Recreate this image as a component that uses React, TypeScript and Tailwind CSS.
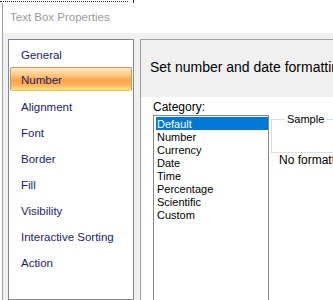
import React from "react";

const navItems = [
  "General",
  "Number",
  "Alignment",
  "Font",
  "Border",
  "Fill",
  "Visibility",
  "Interactive Sorting",
  "Action",
];

const categories = [
  "Default",
  "Number",
  "Currency",
  "Date",
  "Time",
  "Percentage",
  "Scientific",
  "Custom",
];

export default function App() {
  return (
    <div className="w-[333px] h-[300px] overflow-hidden bg-white flex flex-col font-['Liberation_Sans',Arial,sans-serif]">
      {/* top strip behind window */}
      <div className="h-[3px] flex items-start shrink-0">
        <div className="w-[128px] mt-[1px] border-t border-dotted border-[#222]" />
        <div className="ml-[5px] w-[1px] h-[3px] bg-[#333]" />
      </div>
      {/* window */}
      <div className="flex-1 ml-[2px] border-l border-[#a0a0a0] flex flex-col min-h-0">
        <div className="h-[30px] shrink-0 bg-white flex items-center pl-[7px] text-[11.5px] text-[#9a9a9a]">
          Text Box Properties
        </div>
        <div className="flex-1 bg-[#f0f0f0] flex pl-[5px] pt-[6px] min-h-0">
          {/* left nav */}
          <div className="w-[126px] shrink-0 bg-white border border-[#828790] pt-[1px] flex flex-col">
            {navItems.map((item) =>
              item === "Number" ? (
                <div
                  key={item}
                  className="mx-[1px] h-[24px] mb-[2px] flex items-center pl-[10px] pt-[3px] rounded-[2px] border border-[#b99a66] border-b-[#f5c237] bg-[linear-gradient(to_bottom,#fee8c4_0%,#fdcb88_30%,#fca447_55%,#fdb55a_78%,#ffe28a_100%)] text-[11.5px] text-[#1c1a78]"
                >
                  {item}
                </div>
              ) : (
                <div
                  key={item}
                  className="h-[26px] flex items-center pl-[12px] pt-[4px] text-[11.5px] text-[#1c1a78]"
                >
                  {item}
                </div>
              )
            )}
          </div>
          {/* right panel */}
          <div className="ml-[6px] flex-1 border border-r-0 border-b-0 border-[#a0a0a0] flex flex-col min-w-0">
            <div className="h-[57px] shrink-0 bg-[#f0f0f0] flex items-center pl-[9px] pb-[3px] text-[14px] text-black whitespace-nowrap overflow-hidden">
              Set number and date formatting
            </div>
            <div className="flex-1 bg-white flex pl-[12px] pt-[3px] min-w-0">
              <div className="flex flex-col w-[116px] shrink-0">
                <div className="h-[14px] text-[12px] leading-[14px] text-black">Category:</div>
                <div className="mt-[1px] h-[200px] border border-[#828790] pl-[2px] pt-[1px] flex flex-col">
                  {categories.map((c, i) => (
                    <div
                      key={c}
                      className={
                        i === 0
                          ? "h-[13px] leading-[14px] text-[11px] pl-[1px] bg-[#0078d7] text-white"
                          : "h-[13px] leading-[14px] text-[11px] pl-[1px] text-black"
                      }
                    >
                      {c}
                    </div>
                  ))}
                </div>
              </div>
              <div className="ml-[2px] flex-1 flex flex-col pt-[19px] min-w-0">
                <div className="relative h-[34px] border border-r-0 border-[#dcdcdc]">
                  <span className="absolute -top-[8px] left-[13px] px-[2px] bg-white text-[11px] leading-[14px] text-black">
                    Sample
                  </span>
                </div>
                <div className="ml-[8px] h-[14px] text-[12px] leading-[14px] text-black whitespace-nowrap">
                  No formatting
                </div>
              </div>
            </div>
          </div>
        </div>
      </div>
    </div>
  );
}
